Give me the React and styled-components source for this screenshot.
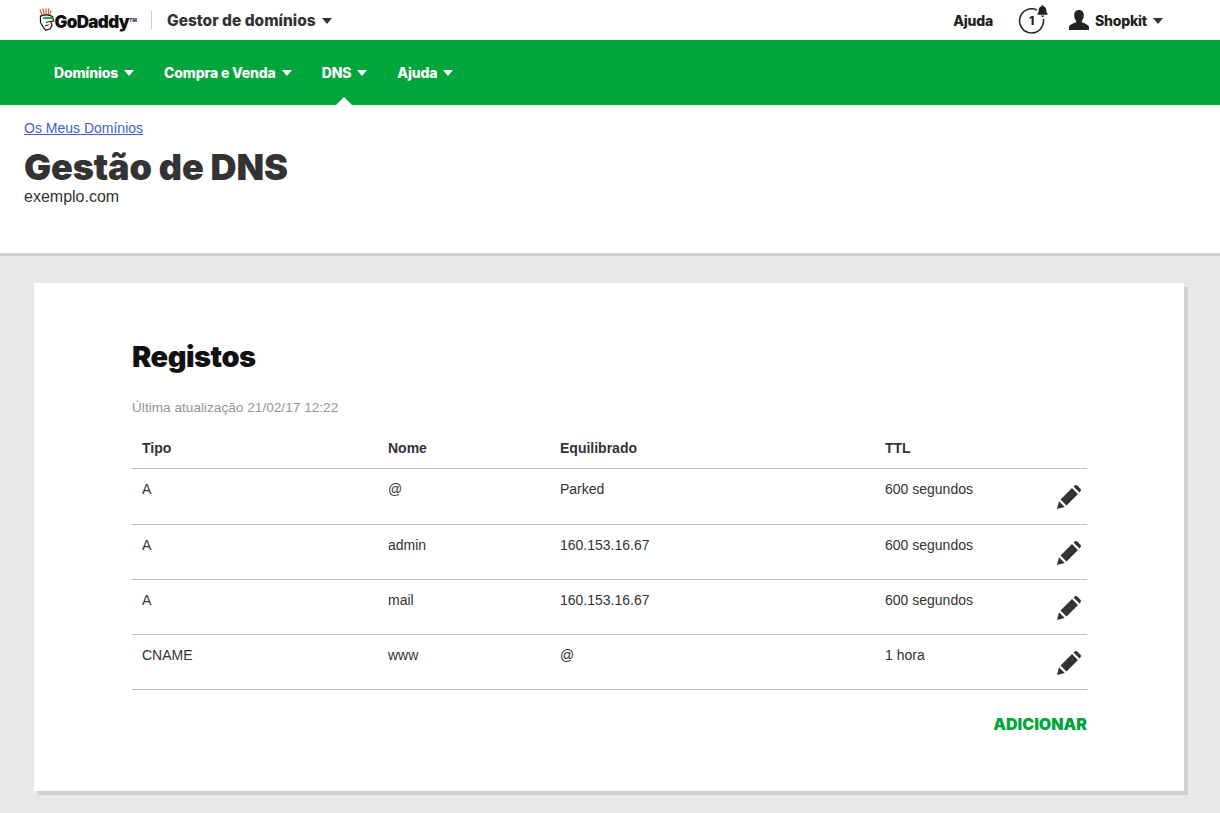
import styled, { createGlobalStyle } from "styled-components"
import { FaBell } from "react-icons/fa"

const GlobalStyle = createGlobalStyle`
    html, body {
        margin: 0;
        padding: 0;
        background: #e8e8e8;
        font-family: "Liberation Sans", Arial, sans-serif;
    }
`

const brandFont = `Inter, Lato, sans-serif`

const TopBar = styled.div`
    height: 40px;
    background: #fff;
    display: flex;
    align-items: center;
    padding: 0 57px 0 39px;
    font-family: ${brandFont};
    font-weight: 800;
    color: #333;
`

const Logo = styled.div`
    display: flex;
    align-items: flex-end;
    width: 98px;
    height: 28px;
    margin-top: -4px;
`

const LogoWord = styled.span`
    font-size: 17px;
    font-weight: 900;
    line-height: 20px;
    letter-spacing: -0.65px;
    color: #111;
`

const LogoTm = styled.sup`
    font-size: 5px;
    line-height: 6px;
    align-self: center;
    margin-top: 4px;
    color: #333;
`

const Divider = styled.div`
    width: 1px;
    height: 20px;
    background: #ccc;
    margin: 0 15px 0 14px;
`

const AppName = styled.div`
    display: flex;
    align-items: center;
    gap: 6px;
    font-size: 15.5px;
`

const Caret = styled.span`
    display: inline-block;
    width: 0;
    height: 0;
    border-left: 5.5px solid transparent;
    border-right: 5.5px solid transparent;
    border-top: 6px solid ${props => props.$color || "#333"};
    margin-top: 1px;
`

const TopRight = styled.div`
    margin-left: auto;
    display: flex;
    align-items: center;
    font-size: 14px;
    letter-spacing: -0.2px;
`

const HelpLink = styled.span`
    margin-right: 25px;
    color: #222;
`

const Notice = styled.div`
    position: relative;
    width: 27px;
    height: 27px;
    margin-right: 24px;
`

const NoticeCount = styled.span`
    position: absolute;
    inset: 0;
    display: flex;
    align-items: center;
    justify-content: center;
    font-size: 12px;
    color: #222;
`

const NoticeBell = styled(FaBell)`
    position: absolute;
    top: -2px;
    right: -3px;
    width: 11px;
    height: 12px;
    color: #222;
`

const UserMenu = styled.div`
    display: flex;
    align-items: center;
    gap: 6px;
    color: #222;
`

const NavBar = styled.nav`
    height: 65px;
    background: #00a63b;
    display: flex;
    align-items: center;
    padding-left: 54px;
    gap: 30px;
    font-family: ${brandFont};
    font-weight: 800;
    font-size: 14px;
    letter-spacing: -0.15px;
    color: #fff;
`

const NavItem = styled.div`
    position: relative;
    height: 65px;
    display: flex;
    align-items: center;
    gap: 6px;

    &::after {
        content: "";
        display: ${props => props.$active ? "block" : "none"};
        position: absolute;
        left: 50%;
        bottom: 0;
        margin-left: -9px;
        border-left: 8px solid transparent;
        border-right: 8px solid transparent;
        border-bottom: 8px solid #fff;
    }
`

const PageHead = styled.header`
    height: 151px;
    box-sizing: border-box;
    background: #fff;
    border-bottom: 3px solid #d0d0d0;
    padding: 15px 24px 0;
`

const Crumb = styled.a`
    display: block;
    font-size: 14px;
    line-height: 17px;
    color: #3f62cf;
    text-decoration: underline;
`

const PageTitle = styled.h1`
    margin: 10px 0 0;
    font-family: ${brandFont};
    font-weight: 900;
    font-size: 36px;
    line-height: 40px;
    letter-spacing: -0.15px;
    color: #333;
`

const DomainName = styled.div`
    font-size: 16px;
    line-height: 20px;
    color: #333;
`

const Content = styled.main`
    padding: 27px 36px 22px 34px;
`

const Card = styled.section`
    height: 508px;
    box-sizing: border-box;
    background: #fff;
    box-shadow: 4px 4px 0 #cfcfcf;
    padding: 55px 97px 0 98px;
`

const CardTitle = styled.h2`
    margin: 0;
    font-family: ${brandFont};
    font-weight: 900;
    font-size: 29px;
    line-height: 38px;
    letter-spacing: -0.5px;
    color: #111;
`

const Updated = styled.div`
    margin-top: 24px;
    font-size: 13.65px;
    line-height: 16px;
    color: #959595;
`

const Table = styled.div`
    margin-top: 10px;
    font-size: 14px;
    color: #333;
`

const Row = styled.div`
    display: grid;
    grid-template-columns: 246px 172px 325px 1fr 40px;
    box-sizing: border-box;
    height: ${props => props.$height || 55}px;
    padding: ${props => props.$head ? "14px" : "12px"} 0 0 10px;
    border-bottom: 1px solid #bdbdbd;
    line-height: 16px;
    font-weight: ${props => props.$head ? 700 : 400};
`

const EditIcon = styled.svg`
    width: 24px;
    height: 24px;
    fill: #333;
    margin-top: 4px;
    justify-self: end;
    margin-right: 6px;
`

const Actions = styled.div`
    display: flex;
    justify-content: flex-end;
    margin-top: 24px;
`

const AddButton = styled.span`
    font-family: ${brandFont};
    font-weight: 900;
    font-size: 16px;
    line-height: 20px;
    color: #00a63b;
`

const records = [
    { type: "A", name: "@", value: "Parked", ttl: "600 segundos", height: 56 },
    { type: "A", name: "admin", value: "160.153.16.67", ttl: "600 segundos" },
    { type: "A", name: "mail", value: "160.153.16.67", ttl: "600 segundos" },
    { type: "CNAME", name: "www", value: "@", ttl: "1 hora" },
]

function GoDaddyHead() {
    return (
        <svg width="16" height="24" viewBox="0 0 16 24">
            <path d="M1 1l2 6M4 0l1.5 7M7 0l.5 7M10 0l-.5 7M12.5 2L11 7" stroke="#e8622a" strokeWidth="1.2" fill="none" />
            <path d="M1.5 8c4-1.5 9-1.5 12.500.5l1 4.500-3 .5 1.500 4-2 3.500-4.500 1.500-2.500-3-3-5z" fill="#fff" stroke="#111" strokeWidth="1.2" />
            <rect x="4" y="9" width="10" height="2" rx="1" fill="#1fa94a" />
            <path d="M7 14.5l4.500-1M6 18l4-1" stroke="#111" strokeWidth="1" />
        </svg>
    )
}

function NoticeRing() {
    return (
        <svg width="27" height="27" viewBox="0 0 27 27">
            <path d="M19 3.200A12 12 0 1 0 25.400 12" stroke="#222" strokeWidth="1.5" fill="none" />
        </svg>
    )
}

function UserGlyph() {
    return (
        <svg width="20" height="20" viewBox="0 0 20 20" fill="#222">
            <path d="M10 0c3 0 4.800 2.200 4.800 5.200 0 2.300-.8 4.300-2 5.500v1.500c3 1 7.200 2.600 7.200 5V20H0v-2.800c0-2.400 4.200-4 7.200-5v-1.500c-1.200-1.200-2-3.200-2-5.500C5.200 2.200 7 0 10 0z" />
        </svg>
    )
}

export default function App() {
    return (
        <>
            <GlobalStyle />
            <TopBar>
                <Logo>
                    <GoDaddyHead />
                    <LogoWord>GoDaddy</LogoWord>
                    <LogoTm>TM</LogoTm>
                </Logo>
                <Divider />
                <AppName>Gestor de domínios <Caret /></AppName>
                <TopRight>
                    <HelpLink>Ajuda</HelpLink>
                    <Notice>
                        <NoticeRing />
                        <NoticeCount>1</NoticeCount>
                        <NoticeBell />
                    </Notice>
                    <UserMenu>
                        <UserGlyph />
                        Shopkit
                        <Caret />
                    </UserMenu>
                </TopRight>
            </TopBar>
            <NavBar>
                <NavItem>Domínios <Caret $color="#fff" /></NavItem>
                <NavItem>Compra e Venda <Caret $color="#fff" /></NavItem>
                <NavItem $active>DNS <Caret $color="#fff" /></NavItem>
                <NavItem>Ajuda <Caret $color="#fff" /></NavItem>
            </NavBar>
            <PageHead>
                <Crumb>Os Meus Domínios</Crumb>
                <PageTitle>Gestão de DNS</PageTitle>
                <DomainName>exemplo.com</DomainName>
            </PageHead>
            <Content>
                <Card>
                    <CardTitle>Registos</CardTitle>
                    <Updated>Última atualização 21/02/17 12:22</Updated>
                    <Table>
                        <Row $head $height={43}>
                            <div>Tipo</div>
                            <div>Nome</div>
                            <div>Equilibrado</div>
                            <div>TTL</div>
                        </Row>
                        {records.map((r, i) => (
                            <Row key={i} $height={r.height}>
                                <div>{r.type}</div>
                                <div>{r.name}</div>
                                <div>{r.value}</div>
                                <div>{r.ttl}</div>
                                <EditIcon viewBox="0 0 24 24">
                                    <path d="M0 24l2-7.800 5.800 5.800zM3.500 14.500L15 3l6 6L9.500 20.500zM16.500 1.500L18 .3 19 0l1 .3L23.700 4l.3 1-.3 1-1.200 1.500z" />
                                </EditIcon>
                            </Row>
                        ))}
                    </Table>
                    <Actions>
                        <AddButton>ADICIONAR</AddButton>
                    </Actions>
                </Card>
            </Content>
        </>
    )
}
